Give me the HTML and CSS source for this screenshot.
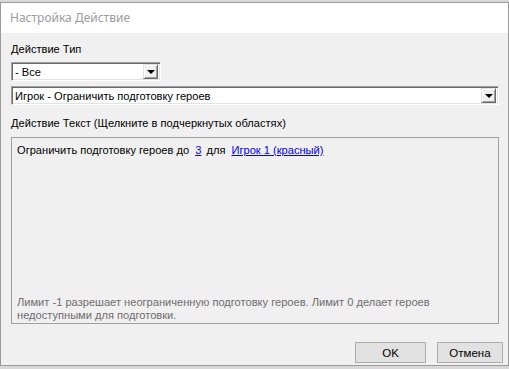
FILE: index.html
```html
<!DOCTYPE html>
<html>
<head>
<meta charset="utf-8">
<link rel="stylesheet" href="styles.css">
</head>
<body>
<div class="window">
  <div class="titlebar">Настройка Действие</div>
  <div class="content">
    <div class="label">Действие Тип</div>
    <div class="combo combo-small">
      <span class="combo-text">- Все</span>
      <span class="combo-btn"><span class="arrow"></span></span>
    </div>
    <div class="combo combo-wide">
      <span class="combo-text">Игрок - Ограничить подготовку героев</span>
      <span class="combo-btn"><span class="arrow"></span></span>
    </div>
    <div class="label label-text">Действие Текст (Щелкните в подчеркнутых областях)</div>
    <div class="textbox">
      <div class="action-text">Ограничить подготовку героев до <a class="link">3</a> для <a class="link">Игрок 1 (красный)</a></div>
      <div class="hint">Лимит -1 разрешает неограниченную подготовку героев. Лимит 0 делает героев недоступными для подготовки.</div>
    </div>
    <div class="buttons">
      <button class="btn btn-ok">OK</button>
      <button class="btn btn-cancel">Отмена</button>
    </div>
  </div>
</div>
</body>
</html>
```
FILE: styles.css
```css
html, body {
  margin: 0;
  padding: 0;
}
body {
  width: 509px;
  height: 369px;
  overflow: hidden;
  background: #d8d8d8;
  font-family: "Liberation Sans", Arial, sans-serif;
  font-size: 11.1px;
  color: #000;
}
.window {
  margin-top: 2px;
  width: 507px;
  height: 362px;
  border: 1px solid #9a9a9a;
  background: #f0f0f0;
  display: flex;
  flex-direction: column;
}
.titlebar {
  height: 30px;
  background: #fff;
  color: #9b9b9b;
  font-family: "Noto Sans", "Segoe UI", sans-serif;
  font-size: 12px;
  line-height: 30px;
  padding-left: 9px;
  flex: none;
}
.content {
  flex: 1;
  padding: 9px 0 0 10px;
  display: flex;
  flex-direction: column;
}
.label {
  line-height: 14px;
  height: 14px;
}
.combo {
  height: 19px;
  box-sizing: border-box;
  background: #fff;
  border-top: 1px solid #a0a0a0;
  border-left: 1px solid #a0a0a0;
  border-right: 1px solid #fff;
  border-bottom: 1px solid #fff;
  box-shadow: inset 1px 1px 0 #696969, inset -1px -1px 0 #e3e3e3;
  display: flex;
  align-items: center;
  justify-content: space-between;
  padding: 2px 2px 2px 3px;
}
.combo-small {
  width: 150px;
  margin-top: 6px;
}
.combo-wide {
  width: 488px;
  margin-top: 5px;
}
.combo-text {
  line-height: 14px;
}
.combo-btn {
  width: 15px;
  height: 15px;
  box-sizing: border-box;
  background: #f0f0f0;
  border-top: 1px solid #e3e3e3;
  border-left: 1px solid #e3e3e3;
  border-right: 1px solid #696969;
  border-bottom: 1px solid #696969;
  box-shadow: inset 1px 1px 0 #fff, inset -1px -1px 0 #a0a0a0;
  display: flex;
  align-items: center;
  justify-content: center;
}
.arrow {
  width: 0;
  height: 0;
  border-left: 4px solid transparent;
  border-right: 4px solid transparent;
  border-top: 4px solid #000;
  margin-top: 1px;
}
.label-text {
  margin-top: 11px;
}
.textbox {
  margin-top: 7px;
  width: 488px;
  height: 187px;
  box-sizing: border-box;
  border: 1px solid #a0a0a0;
  padding: 5px 5px 1px 5px;
  display: flex;
  flex-direction: column;
  justify-content: space-between;
}
.action-text {
  line-height: 14px;
}
.link {
  color: #0000ff;
  text-decoration: underline;
  margin-left: 3px;
  margin-right: 2px;
}
.hint {
  color: #6d6d6d;
  line-height: 13px;
  width: 440px;
}
.buttons {
  margin-top: 18px;
  display: flex;
  justify-content: flex-end;
  gap: 11px;
  padding-right: 5px;
}
.btn {
  height: 21px;
  box-sizing: border-box;
  background: #e1e1e1;
  border: 1px solid #adadad;
  font-family: "Liberation Sans", Arial, sans-serif;
  font-size: 11.5px;
  color: #000;
  padding: 0;
}
.btn-ok {
  width: 71px;
}
.btn-cancel {
  width: 66px;
}
```
